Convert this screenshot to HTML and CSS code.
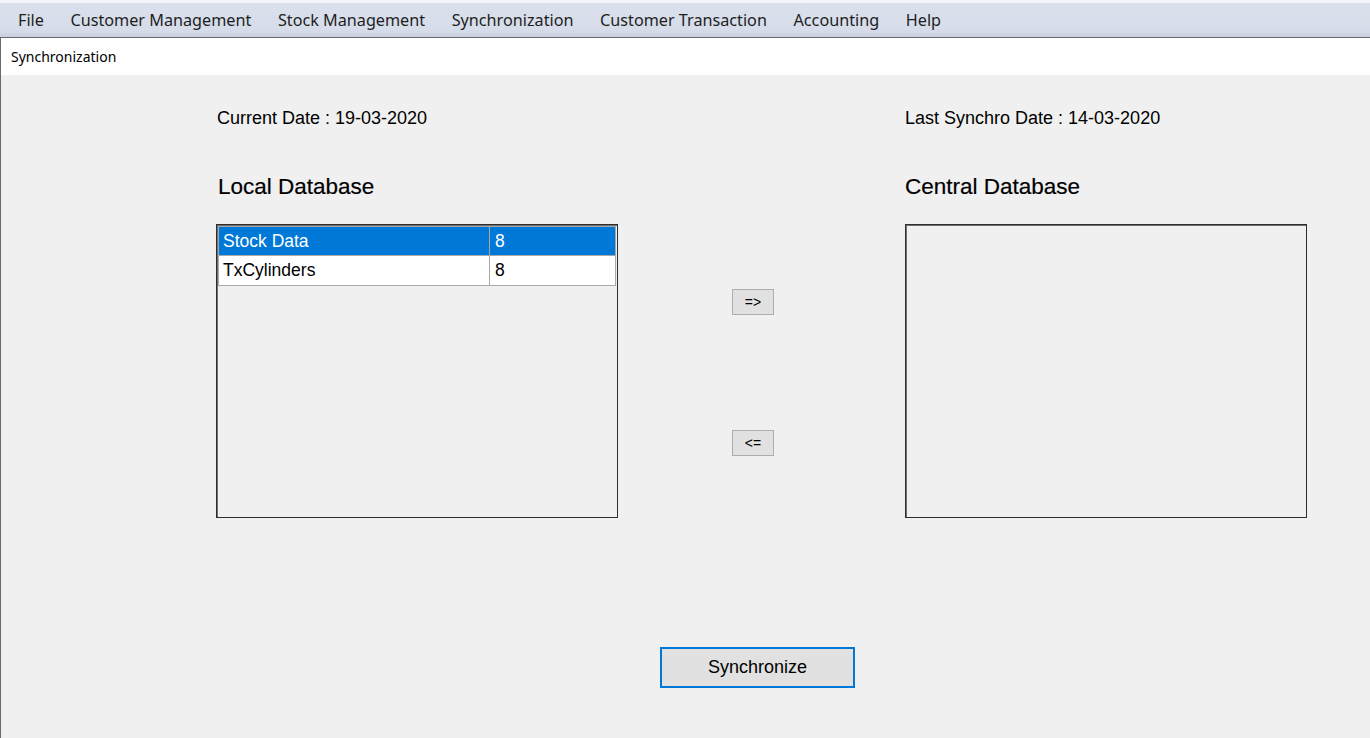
FILE: index.html
```html
<!DOCTYPE html>
<html>
<head>
<meta charset="utf-8">
<link rel="stylesheet" href="styles.css">
</head>
<body>
<div class="window">
  <div class="menubar">
    <span class="menu-item m-file">File</span>
    <span class="menu-item">Customer Management</span>
    <span class="menu-item">Stock Management</span>
    <span class="menu-item">Synchronization</span>
    <span class="menu-item">Customer Transaction</span>
    <span class="menu-item">Accounting</span>
    <span class="menu-item">Help</span>
  </div>
  <div class="tabstrip"><span class="tab-title">Synchronization</span></div>
  <div class="content">
    <div class="grid">
      <div class="date">Current Date : 19-03-2020</div>
      <div></div>
      <div class="date right">Last Synchro Date : 14-03-2020</div>

      <div class="heading">Local Database</div>
      <div></div>
      <div class="heading right">Central Database</div>

      <div class="listbox">
        <div class="lrow selected"><span class="c1">Stock Data</span><span class="c2">8</span></div>
        <div class="lrow"><span class="c1">TxCylinders</span><span class="c2">8</span></div>
      </div>
      <div class="middle">
        <button class="small-btn btn-right">=&gt;</button>
        <button class="small-btn btn-left">&lt;=</button>
      </div>
      <div class="listbox"></div>
    </div>
    <button class="sync-btn">Synchronize</button>
  </div>
</div>
</body>
</html>
```
FILE: styles.css
```css
html, body {
  margin: 0;
  padding: 0;
  width: 1370px;
  height: 738px;
  overflow: hidden;
  background: #f0f0f0;
}
.window {
  width: 1370px;
  height: 738px;
  display: flex;
  flex-direction: column;
  font-family: "Liberation Sans", Arial, sans-serif;
  color: #000;
}
.menubar {
  height: 34px;
  border-top: 3px solid #f4f5f8;
  border-bottom: 1px solid #6a6a6a;
  background: linear-gradient(#dae0ec, #d6dce9 80%, #c9cfdc);
  display: flex;
  align-items: center;
  padding-left: 4.7px;
  font-family: "Noto Sans", "Open Sans", sans-serif;
  font-size: 16.2px;
  color: #1e1e1e;
}
.menu-item {
  padding: 0 13.3px;
}
.tabstrip {
  height: 37px;
  background: #fff;
  border-left: 1px solid #6a6a6a;
  display: flex;
  align-items: center;
  padding-left: 10px;
  font-family: "Noto Sans", "Open Sans", sans-serif;
  font-size: 14px;
}
.content {
  flex: 1;
  border-left: 1px solid #6a6a6a;
  padding-left: 215px;
  padding-top: 31px;
  display: flex;
  flex-direction: column;
}
.grid {
  display: grid;
  grid-template-columns: 402px 287px 402px;
  grid-template-rows: 24px 94px 294px;
  align-items: start;
}
.date {
  font-size: 18px;
  padding-left: 1px;
  line-height: 24px;
}
.heading {
  font-size: 22.5px;
  padding-left: 2px;
  margin-top: 44px;
  line-height: 26px;
  -webkit-text-stroke: 0.2px #000;
}
.right {
  padding-left: 0;
}
.listbox {
  height: 294px;
  box-sizing: border-box;
  border: 1px solid #2d2d2d;
  box-shadow: inset 1px 1px 0 #6e6e6e;
  background: #f0f0f0;
  padding: 1px 1px 0 1px;
}
.lrow {
  display: flex;
  height: 30px;
  box-sizing: border-box;
  background: #fff;
  border: 1px solid #a8a8a8;
  border-top: none;
  font-size: 17.5px;
  align-items: center;
}
.lrow:first-child {
  border-top: 1px solid #a8a8a8;
}
.lrow.selected {
  background: #0078d7;
  color: #fff;
}
.c1 {
  width: 271px;
  padding-left: 4px;
  height: 100%;
  display: flex;
  align-items: center;
  box-sizing: border-box;
  border-right: 1px solid #a8a8a8;
}
.c2 {
  padding-left: 5px;
}
.middle {
  display: flex;
  flex-direction: column;
  align-items: flex-start;
  padding-left: 114px;
  padding-top: 65px;
}
.small-btn {
  width: 42px;
  height: 26px;
  background: #e1e1e1;
  border: 1px solid #adadad;
  font-family: "Liberation Sans", Arial, sans-serif;
  font-size: 14px;
  padding: 0;
  color: #000;
}
.btn-left {
  margin-top: 115px;
}
.sync-btn {
  align-self: flex-start;
  margin-left: 444px;
  margin-top: 129px;
  width: 195px;
  height: 41px;
  background: #e1e1e1;
  border: 2px solid #0078d7;
  font-family: "Liberation Sans", Arial, sans-serif;
  font-size: 18px;
  color: #000;
  padding: 0;
}
```
